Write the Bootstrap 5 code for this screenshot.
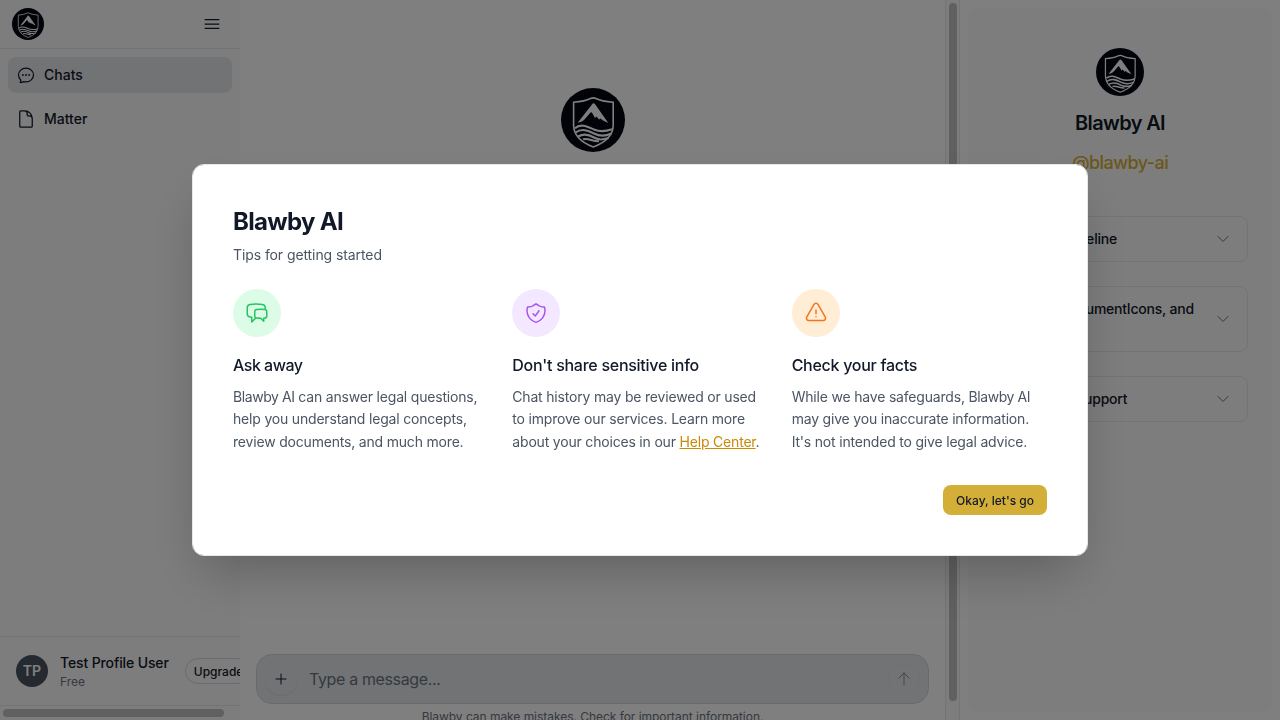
<!DOCTYPE html>
<html lang="en">
<head>
<meta charset="utf-8">
<meta name="viewport" content="width=device-width, initial-scale=1">
<title>Blawby AI</title>
<link rel="stylesheet" href="https://cdn.jsdelivr.net/npm/bootstrap@5.3.0/dist/css/bootstrap.min.css">
<style>
body{font-family:Inter,sans-serif;font-size:14px;line-height:20px;color:#111827;background:#fff}
svg{display:block;flex:none}
.ico{fill:none;stroke:currentColor;stroke-width:1.5;stroke-linecap:round;stroke-linejoin:round}
.side{width:240px;background:#fafafa}
.side-head{height:49px;border-bottom:1px solid #e5e7eb;padding:0 18px 0 12px}
.side-link{height:36px;padding:0 8px;border-radius:8px;color:#111827;gap:8px}
.side-link.active{background:#e5e7eb}
.side-foot{height:69px;border-top:1px solid #e5e7eb;padding:0 16px}
.avatar{width:32px;height:32px;background:#4b5563;color:#fff}
.user-name{letter-spacing:-.12px}
.f12{font-size:12px;line-height:16px}
.muted{color:#6b7280}
.plan{padding-top:1px;margin-bottom:-1px}
.upgrade{height:26px;padding:1px 8px 0;border:1px solid #d1d5db}
.hbar{height:15px;border-top:1px solid #e5e7eb;padding:3px 16px 3px 3px}
.thumb{background:#c1c1c1;border-radius:4px}
.hbar .thumb{height:8px;width:221px}
.vbar{width:15px;border:1px solid #e8e8e8;border-width:0 1px;background:#fafafa;padding:3px 2px 19px 3px}
.vbar .thumb{width:8px}
.hero-logo{margin-top:88px}
.composer{height:50px;background:#e5e7eb;border:1px solid #d1d5db;border-radius:16px;padding:0 8px}
.composer-text{letter-spacing:-.36px}
.disclaimer{margin-top:5px;height:11px;letter-spacing:-.04px}
.round{width:32px;height:32px}
.round.plus{box-shadow:0 1px 2px rgba(0,0,0,.08)}
.round.send{border:1px solid #dfe1e5;color:#8a8d93}
.info{width:320px;padding:8px}
.info-card{background:#fbfbfb;border-radius:8px;padding:40px 24px}
.info-title{font-size:20px;line-height:28px;margin-top:13px;letter-spacing:-.65px}
.info-handle{font-size:18px;line-height:28px;color:#d4af37;margin-top:12px;margin-bottom:39px;letter-spacing:-.58px;font-weight:550}
.fold{border:1px solid #e8e8e8;border-radius:8px;padding:12px 16px 12px 12px;letter-spacing:-.22px}
.modal{background:rgba(0,0,0,.5)}
.modal-dialog{max-width:896px}
.tips{border:1px solid #e5e7eb;border-radius:12px;padding:41px 40px 40px;box-shadow:0 25px 50px -12px rgba(0,0,0,.25)}
.tips h1{font-size:24px;line-height:32px;letter-spacing:-.68px;margin-bottom:7px}
.subtitle{letter-spacing:-.09px}
.soft{color:#4b5563}
.disc{width:48px;height:48px}
.green{background:#dcfce7;color:#22c55e}
.purple{background:#f3e8ff;color:#a855f7}
.orange{background:#ffedd5;color:#f97316}
.tips h2{font-size:16px;line-height:24px;letter-spacing:-.27px}
.tips h2.tight{letter-spacing:-.5px}
.tips p{line-height:22.5px;padding-top:.75px;letter-spacing:-.19px}
.brand{letter-spacing:-.42px}
.help{color:#ca8a04}
.actions{margin-top:31.75px}
.go{background:#d4af37;color:#111827;font-size:12px;line-height:16px;padding:8px 13px 6px;border:0;border-radius:8px}
</style>
</head>
<body class="overflow-hidden">
<svg width="0" height="0" class="position-absolute">
  <symbol id="logo" viewBox="0 0 64 64">
    <circle cx="32" cy="32" r="32" fill="#030712"/>
    <path d="M12.6 14.2Q24 13.4 29.5 10.500Q32.3 9.200 35 10.500Q40.500 13.400 52.200 14.200V37Q52.200 51.500 32.300 59Q12.600 51.500 12.600 37Z" fill="none" stroke="#fff" stroke-width="1.600"/>
    <path d="M32.400 15.200Q31 15.600 30.200 17.400L16.700 34.800Q21 34.200 23 32L29.500 24.500Q30.500 23.800 31.500 25.500L34 30L35.500 28.500L38 31.500L39.500 30.500L42 32.500L47.300 35L34.300 16.500Q33.500 15.300 32.400 15.200Z" fill="#fff"/>
    <g fill="none" stroke="#fff" stroke-width="2.100">
      <path d="M14 40.200C20 35 27 39 33 41.500S46 43 51 41.300"/>
      <path d="M14.500 44.500C21 40 27 42.500 33 45.500S44 48.500 50.300 45.500"/>
      <path d="M17 48.500C23 45 28 46.500 33 49.500S42 51.500 47.500 50"/>
      <path d="M22 51.300C27 49.500 31 53.500 38 53.300"/>
    </g>
  </symbol>
  <symbol id="down" viewBox="0 0 24 24"><path d="m19.500 8.250-7.500 7.500-7.500-7.500"/></symbol>
</svg>

<div class="d-flex vh-100">
  <aside class="side d-flex flex-column overflow-hidden flex-shrink-0">
    <header class="side-head d-flex align-items-center justify-content-between">
      <svg width="32" height="32"><use href="#logo"/></svg>
      <svg class="ico" width="20" height="20" viewBox="0 0 24 24"><path d="M3.750 6.750h16.500M3.750 12h16.500m-16.500 5.250h16.500"/></svg>
    </header>
    <nav class="d-flex flex-column gap-2 p-2 flex-grow-1">
      <a class="side-link active d-flex align-items-center text-decoration-none fw-medium" href="#">
        <svg class="ico" width="20" height="20" viewBox="0 0 24 24"><path d="M8.625 12a.375.375 0 1 1-.75 0 .375.375 0 0 1 .75 0Zm0 0H8.250m4.125 0a.375.375 0 1 1-.75 0 .375.375 0 0 1 .75 0Zm0 0H12m4.125 0a.375.375 0 1 1-.75 0 .375.375 0 0 1 .75 0Zm0 0h-.375M21 12c0 4.556-4.030 8.250-9 8.250a9.764 9.764 0 0 1-2.555-.337A5.972 5.972 0 0 1 5.410 20.970a5.969 5.969 0 0 1-.474-.065 4.480 4.480 0 0 0 .978-2.025c.09-.457-.133-.901-.467-1.226C3.930 16.178 3 14.189 3 12c0-4.556 4.030-8.250 9-8.250s9 3.694 9 8.250Z"/></svg>
        <span>Chats</span>
      </a>
      <a class="side-link d-flex align-items-center text-decoration-none fw-medium" href="#">
        <svg class="ico" width="20" height="20" viewBox="0 0 24 24"><path d="M19.500 14.250v-2.625a3.375 3.375 0 0 0-3.375-3.375h-1.500A1.125 1.125 0 0 1 13.500 7.125v-1.500a3.375 3.375 0 0 0-3.375-3.375H8.250m2.250 0H5.625c-.621 0-1.125.504-1.125 1.125v17.250c0 .621.504 1.125 1.125 1.125h12.750c.621 0 1.125-.504 1.125-1.125V11.250a9 9 0 0 0-9-9Z"/></svg>
        <span>Matter</span>
      </a>
    </nav>
    <div class="side-foot d-flex align-items-center">
      <div class="avatar rounded-circle d-flex align-items-center justify-content-center fw-semibold flex-shrink-0">TP</div>
      <div class="ms-2 ps-1 text-nowrap">
        <div class="fw-medium user-name">Test Profile User</div>
        <div class="f12 muted plan">Free</div>
      </div>
      <div class="upgrade f12 fw-medium ms-3 rounded-pill d-flex align-items-center flex-shrink-0">Upgrade</div>
    </div>
    <div class="hbar"><div class="thumb"></div></div>
  </aside>

  <main class="flex-grow-1 d-flex flex-column align-items-center justify-content-between px-3">
    <svg class="hero-logo" width="64" height="64"><use href="#logo"/></svg>
    <div class="w-100">
      <div class="composer d-flex align-items-center">
        <div class="round plus rounded-circle d-flex align-items-center justify-content-center"><svg class="ico" width="16" height="16" viewBox="0 0 24 24"><path d="M12 4.500v15m7.500-7.500h-15"/></svg></div>
        <span class="composer-text fs-6 muted ms-2 ps-1 flex-grow-1">Type a message...</span>
        <div class="round send rounded-circle d-flex align-items-center justify-content-center"><svg class="ico" width="16" height="16" viewBox="0 0 24 24"><path d="M4.500 10.500 12 3m0 0 7.500 7.500M12 3v18"/></svg></div>
      </div>
      <div class="disclaimer f12 muted text-center">Blawby can make mistakes. Check for important information.</div>
    </div>
  </main>

  <div class="vbar d-flex flex-shrink-0"><div class="thumb"></div></div>

  <aside class="info flex-shrink-0">
    <div class="info-card h-100 d-flex flex-column align-items-center">
      <svg width="48" height="48"><use href="#logo"/></svg>
      <div class="info-title fw-semibold">Blawby AI</div>
      <div class="info-handle">@blawby-ai</div>
      <div class="d-flex flex-column gap-4 w-100">
        <div class="fold d-flex align-items-center justify-content-between fw-medium"><span>Request Timeline</span><svg class="ico muted" width="16" height="16"><use href="#down"/></svg></div>
        <div class="fold d-flex align-items-center justify-content-between fw-medium"><span>Images, DocumentIcons, and<br>Media</span><svg class="ico muted" width="16" height="16"><use href="#down"/></svg></div>
        <div class="fold d-flex align-items-center justify-content-between fw-medium"><span>Security &amp; Support</span><svg class="ico muted" width="16" height="16"><use href="#down"/></svg></div>
      </div>
    </div>
  </aside>
</div>

<div class="modal d-block" role="dialog">
  <div class="modal-dialog modal-dialog-centered my-0 mx-auto min-vh-100">
    <div class="modal-content tips">
      <h1 class="fw-bold">Blawby AI</h1>
      <div class="soft subtitle mb-4">Tips for getting started</div>
      <div class="row gx-4">
        <div class="col-4">
          <div class="disc green rounded-circle d-flex align-items-center justify-content-center mb-3"><svg class="ico" width="24" height="24" viewBox="0 0 24 24"><path d="M20.250 8.511c.884.284 1.500 1.128 1.500 2.097v4.286c0 1.136-.847 2.100-1.980 2.193-.34.027-.68.052-1.020.072v3.091l-3-3c-1.354 0-2.694-.055-4.020-.163a2.115 2.115 0 0 1-.825-.242m9.345-8.334a2.126 2.126 0 0 0-.476-.095 48.640 48.640 0 0 0-8.048 0c-1.131.094-1.976 1.057-1.976 2.192v4.286c0 .837.46 1.580 1.155 1.951m9.345-8.334V6.637c0-1.621-1.152-3.026-2.760-3.235A48.455 48.455 0 0 0 11.250 3c-2.115 0-4.198.137-6.240.402-1.608.209-2.760 1.614-2.760 3.235v6.226c0 1.621 1.152 3.026 2.760 3.235.577.075 1.157.14 1.740.194V21l4.155-4.155"/></svg></div>
          <h2 class="fw-medium tight mb-2">Ask away</h2>
          <p class="soft mb-0"><span class="brand">Blawby AI</span> can answer legal questions, help you understand legal concepts, review documents, and much more.</p>
        </div>
        <div class="col-4">
          <div class="disc purple rounded-circle d-flex align-items-center justify-content-center mb-3"><svg class="ico" width="24" height="24" viewBox="0 0 24 24"><path d="M9 12.750 11.250 15 15 9.750m-3-7.036A11.959 11.959 0 0 1 3.598 6 11.990 11.990 0 0 0 3 9.749c0 5.592 3.824 10.290 9 11.623 5.176-1.332 9-6.030 9-11.622 0-1.310-.21-2.571-.598-3.751h-.152c-3.196 0-6.100-1.248-8.250-3.285Z"/></svg></div>
          <h2 class="fw-medium mb-2">Don't share sensitive info</h2>
          <p class="soft mb-0">Chat history may be reviewed or used to improve our services. Learn more about your choices in our <a class="help" href="#">Help Center</a>.</p>
        </div>
        <div class="col-4">
          <div class="disc orange rounded-circle d-flex align-items-center justify-content-center mb-3"><svg class="ico" width="24" height="24" viewBox="0 0 24 24"><path d="M12 9v3.750m-9.303 3.376c-.866 1.500.217 3.374 1.948 3.374h14.710c1.730 0 2.813-1.874 1.948-3.374L13.949 3.378c-.866-1.500-3.032-1.500-3.898 0L2.697 16.126ZM12 15.750h.007v.008H12v-.008Z"/></svg></div>
          <h2 class="fw-medium mb-2">Check your facts</h2>
          <p class="soft mb-0">While we have safeguards, <span class="brand">Blawby AI</span> may give you inaccurate information. It's not intended to give legal advice.</p>
        </div>
      </div>
      <div class="actions d-flex justify-content-end"><button class="go fw-medium" type="button">Okay, let's go</button></div>
    </div>
  </div>
</div>
<script src="https://cdn.jsdelivr.net/npm/bootstrap@5.3.0/dist/js/bootstrap.bundle.min.js"></script>
</body>
</html>
